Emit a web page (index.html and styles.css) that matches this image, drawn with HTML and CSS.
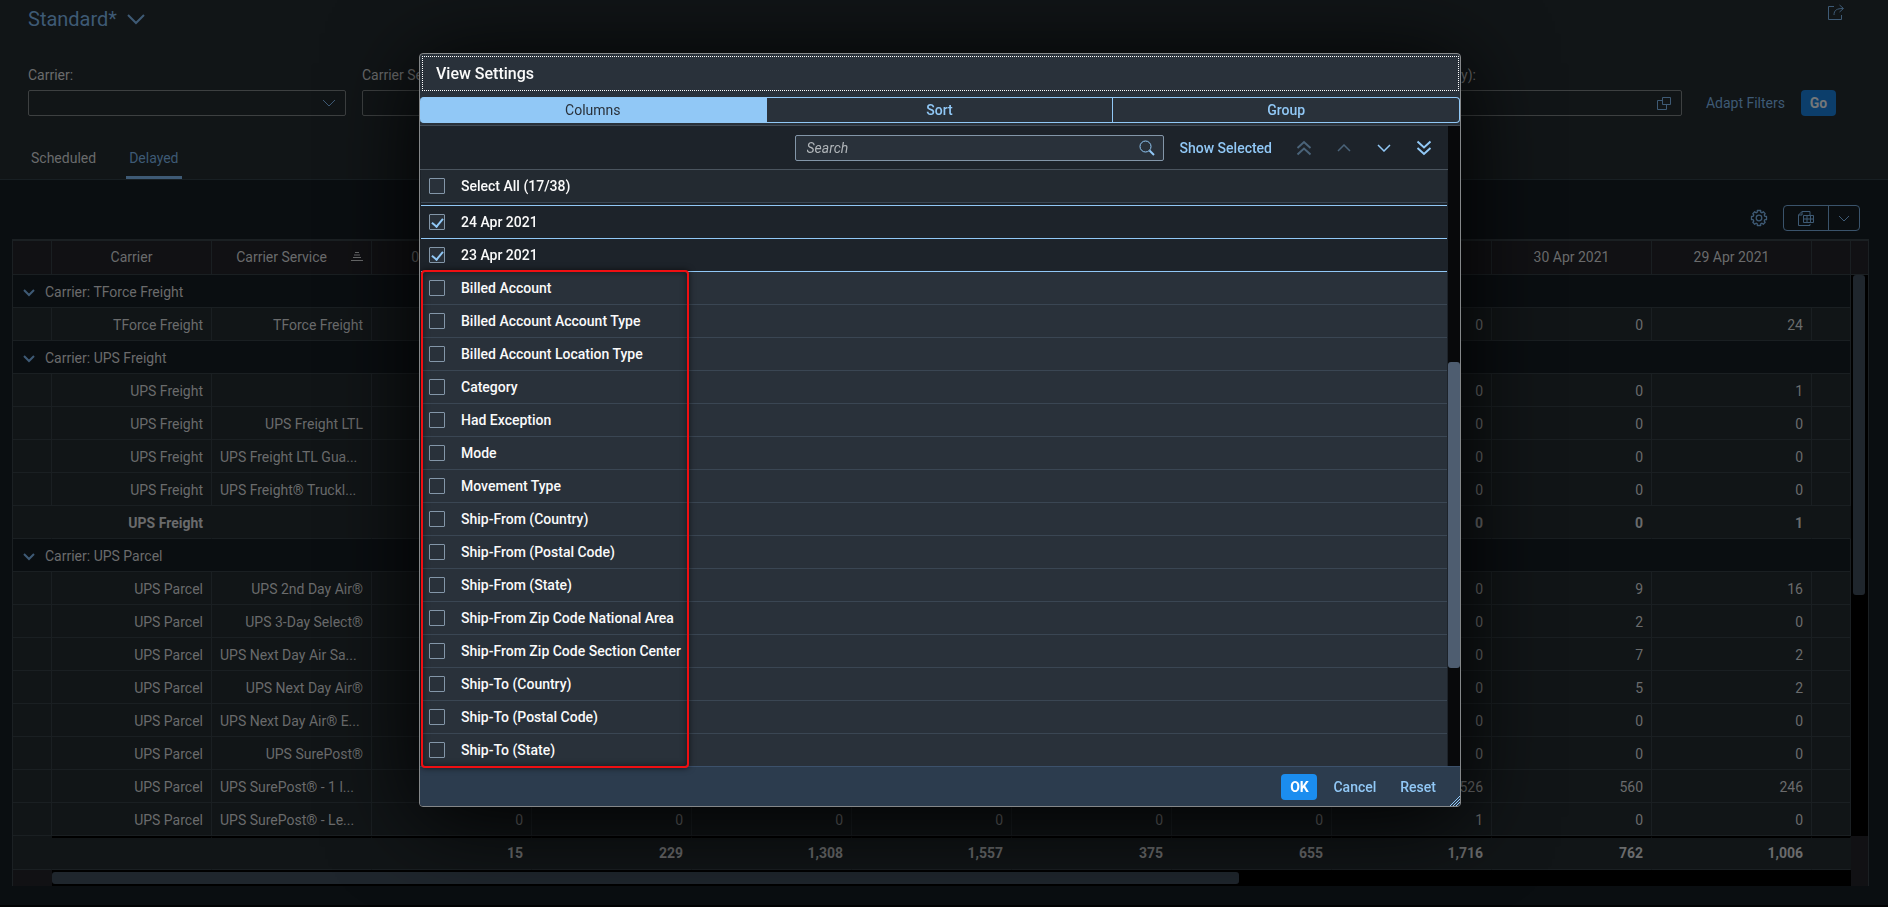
FILE: index.html
```
<!DOCTYPE html>
<html lang="en">
<head>
<meta charset="utf-8">
<title>View Settings</title>
<link rel="stylesheet" href="styles.css">
</head>
<body>
<main class="page">
  <header class="top">
    <div class="title-bar">
      <button class="variant" type="button">Standard*
        <svg width="18" height="12" viewBox="0 0 18 12"><path d="M1 2l8 8 8-8"/></svg>
      </button>
      <button class="icon-btn" type="button" aria-label="Share">
        <svg width="18" height="17" viewBox="0 0 18 17"><path d="M7 2.500H1.500v13h13V11M7 11c0-5 3-6.500 9-6.500M12.500 1l4 3.500-4 3.500"/></svg>
      </button>
    </div>
    <form class="filters">
      <div class="field"><label for="f1">Carrier:</label>
        <div class="box"><input id="f1" type="text"><svg width="14" height="8" viewBox="0 0 14 8"><path d="M1 1l6 6 6-6"/></svg></div></div>
      <div class="field"><label for="f2">Carrier Service:</label>
        <div class="box"><input id="f2" type="text"></div></div>
      <div class="field"><label for="f3">Mode:</label>
        <div class="box"><input id="f3" type="text"></div></div>
      <div class="field"><label for="f4">Category:</label>
        <div class="box"><input id="f4" type="text"></div></div>
      <div class="field"><label for="f5">Ship-To (Country):</label>
        <div class="box"><input id="f5" type="text"><svg width="16" height="15" viewBox="0 0 16 15"><path d="M6.500 1.500h8v7h-8zM6 4.500H1.500v9h9V9"/></svg></div></div>
      <button class="adapt" type="button">Adapt Filters</button>
      <button class="go" type="button">Go</button>
    </form>
    <nav class="tabs">
      <a href="#scheduled">Scheduled</a>
      <a href="#delayed" class="active">Delayed</a>
    </nav>
  </header>
  <section class="content">
    <div class="tools">
      <button class="icon-btn" type="button" aria-label="Settings">
        <svg class="gear" width="18" height="18" viewBox="0 0 18 18"><circle cx="9" cy="9" r="2.800"/><path d="M7.300 1.500h3.400v1.700l1.300.6 1.300-1 1.900 1.900-1 1.300.6 1.300h1.700v3.400h-1.700l-.6 1.300 1 1.300-1.900 1.900-1.300-1-1.300.6v1.700H7.300v-1.700L6 14.200l-1.300 1-1.900-1.900 1-1.300-.6-1.300H1.500V7.300h1.700L3.800 6l-1-1.300 1.900-1.900 1.300 1 1.300-.6z"/></svg>
      </button>
      <div class="split">
        <button type="button" aria-label="Export">
          <svg width="18" height="17" viewBox="0 0 18 17"><path d="M5 1.500h8V5M1.500 5v10.500H13V14M1.500 5L5 1.500V5z"/><path d="M6.500 5.500h10v7h-10zM6.500 9h10M10 5.500v7M13.500 5.500v7"/></svg>
        </button>
        <button type="button" aria-label="More export options">
          <svg width="12" height="7" viewBox="0 0 12 7"><path d="M1 1l5 5 5-5"/></svg>
        </button>
      </div>
    </div>
    <div class="table-wrap">
      <div class="table-main">
        <table>
          <colgroup><col class="c-sel"><col span="11" class="c-data"><col></colgroup>
          <thead><tr><th></th><th>Carrier</th><th><span class="sorted">Carrier Service<svg width="12" height="9" viewBox="0 0 12 9"><path d="M4 .5h4M3 3h6M2 5.500h8M0 8.500h12"/></svg></span></th><th>07 May 2021</th><th></th><th></th><th></th><th></th><th></th><th></th><th>30 Apr 2021</th><th>29 Apr 2021</th><th></th></tr></thead>
          <tbody>
            <tr class="group"><td colspan="13"><svg width="12" height="8" viewBox="0 0 12 8"><path d="M1 1l5 5 5-5"/></svg>Carrier: TForce Freight</td></tr>
            <tr><td></td><td>TForce Freight</td><td>TForce Freight</td><td></td><td></td><td></td><td></td><td></td><td></td><td>0</td><td>0</td><td>24</td><td></td></tr>
            <tr class="group"><td colspan="13"><svg width="12" height="8" viewBox="0 0 12 8"><path d="M1 1l5 5 5-5"/></svg>Carrier: UPS Freight</td></tr>
            <tr><td></td><td>UPS Freight</td><td></td><td></td><td></td><td></td><td></td><td></td><td></td><td>0</td><td>0</td><td>1</td><td></td></tr>
            <tr><td></td><td>UPS Freight</td><td>UPS Freight LTL</td><td></td><td></td><td></td><td></td><td></td><td></td><td>0</td><td>0</td><td>0</td><td></td></tr>
            <tr><td></td><td>UPS Freight</td><td class="cut">UPS Freight LTL Gua...</td><td></td><td></td><td></td><td></td><td></td><td></td><td>0</td><td>0</td><td>0</td><td></td></tr>
            <tr><td></td><td>UPS Freight</td><td class="cut">UPS Freight® Truckl...</td><td></td><td></td><td></td><td></td><td></td><td></td><td>0</td><td>0</td><td>0</td><td></td></tr>
            <tr class="subtotal"><td></td><td>UPS Freight</td><td></td><td></td><td></td><td></td><td></td><td></td><td></td><td>0</td><td>0</td><td>1</td><td></td></tr>
            <tr class="group"><td colspan="13"><svg width="12" height="8" viewBox="0 0 12 8"><path d="M1 1l5 5 5-5"/></svg>Carrier: UPS Parcel</td></tr>
            <tr><td></td><td>UPS Parcel</td><td>UPS 2nd Day Air®</td><td></td><td></td><td></td><td></td><td></td><td></td><td>0</td><td>9</td><td>16</td><td></td></tr>
            <tr><td></td><td>UPS Parcel</td><td>UPS 3-Day Select®</td><td></td><td></td><td></td><td></td><td></td><td></td><td>0</td><td>2</td><td>0</td><td></td></tr>
            <tr><td></td><td>UPS Parcel</td><td class="cut">UPS Next Day Air Sa...</td><td></td><td></td><td></td><td></td><td></td><td></td><td>0</td><td>7</td><td>2</td><td></td></tr>
            <tr><td></td><td>UPS Parcel</td><td>UPS Next Day Air®</td><td></td><td></td><td></td><td></td><td></td><td></td><td>0</td><td>5</td><td>2</td><td></td></tr>
            <tr><td></td><td>UPS Parcel</td><td class="cut">UPS Next Day Air® E...</td><td></td><td></td><td></td><td></td><td></td><td></td><td>0</td><td>0</td><td>0</td><td></td></tr>
            <tr><td></td><td>UPS Parcel</td><td>UPS SurePost®</td><td></td><td></td><td></td><td></td><td></td><td></td><td>0</td><td>0</td><td>0</td><td></td></tr>
            <tr><td></td><td>UPS Parcel</td><td class="cut">UPS SurePost® - 1 l...</td><td></td><td></td><td></td><td></td><td></td><td></td><td>1,526</td><td>560</td><td>246</td><td></td></tr>
            <tr><td></td><td>UPS Parcel</td><td class="cut">UPS SurePost® - Le...</td><td>0</td><td>0</td><td>0</td><td>0</td><td>0</td><td>0</td><td>1</td><td>0</td><td>0</td><td></td></tr>
          </tbody>
          <tfoot><tr><td></td><td></td><td></td><td>15</td><td>229</td><td>1,308</td><td>1,557</td><td>375</td><td>655</td><td>1,716</td><td>762</td><td>1,006</td><td></td></tr></tfoot>
        </table>
        <div class="h-scroll"><div class="h-track"><div class="h-thumb"></div></div></div>
      </div>
      <div class="v-side"><div class="v-head"></div><div class="v-track"><div class="v-thumb"></div></div><div class="v-foot"></div></div>
    </div>
  </section>
</main>

<div class="overlay">
  <div class="dialog" role="dialog" aria-labelledby="dlg-title">
    <div class="dlg-head"><h1 id="dlg-title">View Settings</h1></div>
    <div class="segments">
      <button type="button" class="on">Columns</button>
      <button type="button">Sort</button>
      <button type="button">Group</button>
    </div>
    <div class="dlg-body">
      <div class="list-pane">
        <div class="list-tools">
          <div class="search"><input type="search" placeholder="Search" aria-label="Search">
            <svg width="16" height="16" viewBox="0 0 16 16"><circle cx="6.500" cy="6.500" r="5.500"/><path class="thick" d="M10.500 10.500l4.500 4.500"/></svg></div>
          <button type="button" class="link">Show Selected</button>
          <div class="moves">
            <button type="button" disabled aria-label="Move to top"><svg width="16" height="16" viewBox="0 0 16 16"><path class="thick" d="M1.500 8L8 2l6.500 6M1.500 14.500L8 8.500l6.500 6"/></svg></button>
            <button type="button" disabled aria-label="Move up"><svg width="14" height="8" viewBox="0 0 14 8"><path class="mid" d="M1 7l6-6 6 6"/></svg></button>
            <button type="button" aria-label="Move down"><svg width="14" height="8" viewBox="0 0 14 8"><path class="mid" d="M1 1l6 6 6-6"/></svg></button>
            <button type="button" aria-label="Move to bottom"><svg width="16" height="16" viewBox="0 0 16 16"><path class="thick" d="M1.500 1.500L8 7.500l6.500-6M1.500 8L8 14l6.500-6"/></svg></button>
          </div>
        </div>
        <label class="row all"><input type="checkbox">Select All (17/38)</label>
        <div class="picked">
          <label class="row"><input type="checkbox" checked>24 Apr 2021</label>
          <label class="row"><input type="checkbox" checked>23 Apr 2021</label>
        </div>
        <div class="open">
          <label class="row"><input type="checkbox">Billed Account</label>
          <label class="row"><input type="checkbox">Billed Account Account Type</label>
          <label class="row"><input type="checkbox">Billed Account Location Type</label>
          <label class="row"><input type="checkbox">Category</label>
          <label class="row"><input type="checkbox">Had Exception</label>
          <label class="row"><input type="checkbox">Mode</label>
          <label class="row"><input type="checkbox">Movement Type</label>
          <label class="row"><input type="checkbox">Ship-From (Country)</label>
          <label class="row"><input type="checkbox">Ship-From (Postal Code)</label>
          <label class="row"><input type="checkbox">Ship-From (State)</label>
          <label class="row"><input type="checkbox">Ship-From Zip Code National Area</label>
          <label class="row"><input type="checkbox">Ship-From Zip Code Section Center</label>
          <label class="row"><input type="checkbox">Ship-To (Country)</label>
          <label class="row"><input type="checkbox">Ship-To (Postal Code)</label>
          <label class="row"><input type="checkbox">Ship-To (State)</label>
          <div class="highlight"></div>
        </div>
      </div>
      <div class="dlg-scroll"><div class="dlg-thumb"></div></div>
    </div>
    <div class="dlg-foot">
      <button type="button" class="ok">OK</button>
      <button type="button">Cancel</button>
      <button type="button">Reset</button>
      <svg class="grip" width="10" height="10" viewBox="0 0 10 10"><path d="M0 10L10 0M3 10l7-7M6 10l4-4"/></svg>
    </div>
  </div>
</div>
</body>
</html>
```
FILE: styles.css
```
* { box-sizing: border-box; }
body {
  margin: 0;
  background: #0a0e11;
  color: #6a6b6c;
  font: 14px/16px Roboto, "Liberation Sans", sans-serif;
}
button, input { font: inherit; color: inherit; }
button { background: none; border: 0; padding: 0; }
svg { display: block; fill: none; stroke: currentColor; flex: none; }
.thick { stroke-width: 2; }
.mid { stroke-width: 1.5; }
.gear { stroke-width: 1.3; stroke-linejoin: round; }

.page { min-height: 100vh; border-bottom: 2px solid #020304; }
.top { background: #111517; border-bottom: 1px solid #181f23; }
.title-bar { display: flex; justify-content: space-between; align-items: flex-start; padding: 4px 43px 0 28px; color: #3e5a75; }
.variant { display: flex; align-items: center; gap: 10px; font-size: 20px; line-height: 30px; }
.variant svg { stroke-width: 2; }
.filters { display: flex; align-items: flex-end; gap: 16px; padding: 32px 52px 0 28px; }
.field { flex: 1; }
.field label { display: block; line-height: 18px; margin-bottom: 6px; }
.box { display: flex; align-items: center; height: 26px; padding-right: 9px; border: 1px solid #3d4041; border-radius: 2px; color: #3e5a75; }
.box input { flex: 1; min-width: 0; background: none; border: 0; outline: 0; }
.adapt, .go { height: 26px; color: #3e5a75; }
.adapt { padding-left: 8px; }
.go { width: 35px; border-radius: 4px; background: #0c3e6b; color: #747779; font-weight: 700; }
.tabs { display: flex; gap: 27px; padding: 32px 28px 0; }
.tabs a { padding: 2px 3px 10px; line-height: 16px; color: #6a6b6c; text-decoration: none; border-bottom: 3px solid transparent; }
.tabs .active { color: #3e5a75; border-color: #3e5a75; }

.content { padding: 25px 19px 19px 12px; }
.tools { display: flex; justify-content: flex-end; align-items: center; gap: 15px; padding: 0 9px 8px; color: #3e5a75; }
.split { display: flex; border: 1px solid #3a536b; border-radius: 4px; }
.split button { display: grid; place-items: center; width: 30px; height: 24px; }
.split button:first-child { width: 45px; border-right: 1px solid #3a536b; }

.table-wrap { display: flex; border-top: 2px solid #1b2023; }
.table-main { flex: 1; min-width: 0; border-left: 1px solid #1b2023; }
table { width: 100%; table-layout: fixed; border-collapse: separate; border-spacing: 0; background: #111517; }
.c-sel { width: 39px; }
.c-data { width: 160px; }
th, td { height: 33px; padding: 1px 8px 0; border: solid #1a1f22; border-width: 0 1px 1px 0; text-align: right; font-weight: 400; white-space: nowrap; overflow: hidden; }
th { height: 34px; padding: 0 8px 2px; background: #111114; text-align: center; }
.sorted { display: flex; justify-content: flex-end; align-items: center; gap: 24px; }
.cut { text-align: left; }
.group td { background: #0a0e11; text-align: left; padding-left: 10px; }
.group svg { display: inline-block; margin-right: 10px; color: #3e5a75; stroke-width: 2; }
.subtotal td { font-weight: 700; border-right-color: transparent; }
tfoot td { height: 34px; padding: 0 8px 2px; font-weight: 700; border-right-color: transparent; border-top: 2px solid #000; }
tfoot td:first-child { border-top-color: transparent; }
.h-scroll { padding-left: 39px; background: #111114; }
.h-track { height: 16px; padding: 2px 0; background: #000; }
.h-thumb { width: 66%; height: 12px; border-radius: 3px; background: #1f262d; }
.v-side { width: 18px; display: flex; flex-direction: column; border-right: 1px solid #1b2023; background: #111114; }
.v-head { height: 34px; border-bottom: 1px solid #1b2023; }
.v-track { flex: 1; padding: 0 3px 0 2px; background: #000; }
.v-thumb { height: 57%; border-radius: 3px; background: #1f262d; }
.v-foot { height: 50px; }

.overlay { position: fixed; inset: 0; display: flex; justify-content: center; align-items: center; padding: 0 8px 47px 0; }
.dialog { position: relative; width: 1042px; max-width: 96%; overflow: hidden; border: 1px solid #848789; border-radius: 4px; background: #29313a; color: #fafafa; box-shadow: 0 10px 90px 0 #000; }
.dlg-head { margin: 2px 1px 6px 2px; padding: 8px 13px; border: 1px dotted #fff; }
h1 { margin: 0; font-size: 16px; line-height: 17px; font-weight: 500; }
.segments { display: flex; padding-bottom: 2px; border-bottom: 1px solid #424b55; }
.segments button { flex: 1; height: 26px; border: 1px solid #91c8f6; border-left-width: 0; color: #91c8f6; font-weight: 500; }
.segments .on { background: #91c8f6; color: #29313a; border-radius: 4px 0 0 4px; font-weight: 400; }
.segments button:last-child { border-radius: 0 4px 4px 0; }
.dlg-body { display: flex; background: #1d232a; }
.list-pane { flex: 1; min-width: 0; }
.list-tools { display: flex; justify-content: flex-end; align-items: center; height: 44px; padding-right: 16px; border-bottom: 1px solid #4a545e; color: #91c8f6; }
.search { display: flex; align-items: center; width: 369px; height: 26px; padding: 0 8px 0 11px; border: 1px solid #8396a8; border-radius: 2px; background: #29313a; }
.search input { flex: 1; min-width: 0; padding: 0; background: none; border: 0; outline: 0; }
.search input::placeholder { color: #b0b5b9; font-style: italic; opacity: 1; }
.link { margin: 0 24px 0 16px; font-weight: 500; color: #91c8f6; }
.moves { display: flex; gap: 24px; align-items: center; }
.moves button { width: 16px; height: 16px; display: grid; place-items: center; }
.moves button:disabled { color: #4a6379; }
.row { display: flex; align-items: center; gap: 16px; height: 33px; padding-left: 8px; margin: 0 1px; border-bottom: 1px solid #3a4653; font-weight: 500; }
.row input { appearance: none; width: 16px; height: 16px; margin: 0; border: 1px solid #8396a8; border-radius: 1px; background: #29313a; display: grid; place-items: center; }
.row input:checked::after { content: ""; width: 5px; height: 9px; margin-bottom: 2px; border: solid #91c8f6; border-width: 0 2px 2px 0; transform: rotate(40deg); }
.all { background: #232a31; }
.picked { margin-top: 2px; }
.picked .row { border-color: #91c8f6; }
.picked .row:first-child { height: 34px; border-top: 1px solid #91c8f6; }
.open { position: relative; }
.open .row { background: #29313a; }
.open .row:nth-child(15) { height: 32px; border-bottom: 0; }
.highlight { position: absolute; top: -2px; bottom: -2px; left: 1px; width: 268px; border: 2px solid #f00f12; border-radius: 4px; box-shadow: 0 0 6px rgba(0, 0, 0, .6), inset 0 0 6px rgba(0, 0, 0, .5); pointer-events: none; }
.dlg-scroll { width: 12px; background: #08090b; }
.dlg-thumb { height: 306px; margin-top: 236px; border-radius: 3px; background: #4e5d70; }
.dlg-foot { display: flex; justify-content: flex-end; gap: 16px; padding: 7px 24px 6px; border-top: 1px solid #3c516b; background: #2c3c4e; color: #91c8f6; }
.dlg-foot button { height: 26px; font-weight: 500; }
.dlg-foot button + button + button { margin-left: 8px; }
.dlg-foot .ok { width: 36px; border-radius: 4px; background: #1b8def; color: #fff; font-weight: 700; }
.grip { position: absolute; right: 0; bottom: 0; }
```
